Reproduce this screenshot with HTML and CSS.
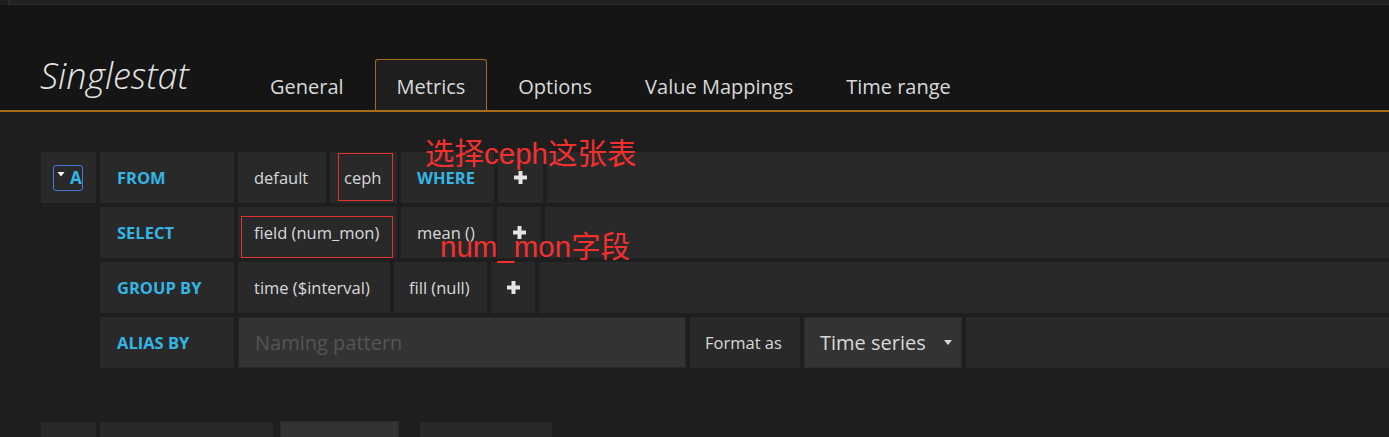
FILE: index.html
```html
<!DOCTYPE html>
<html lang="zh">
<head>
<meta charset="utf-8">
<title>Singlestat - Metrics</title>
<link rel="stylesheet" href="styles.css">
</head>
<body>
<div class="topbar"></div>
<header class="header">
  <h1 class="title">Singlestat</h1>
  <nav class="tabs">
    <a class="tab">General</a>
    <a class="tab active">Metrics</a>
    <a class="tab">Options</a>
    <a class="tab">Value Mappings</a>
    <a class="tab">Time range</a>
  </nav>
</header>
<main class="editor">
  <div class="query">
    <div class="row">
      <div class="cell toggle">
        <span class="toggle-box">
          <svg class="tri" width="7" height="5" viewBox="0 0 7 5"><path d="M0 0H7L3.5 4.5Z" fill="#ffffff"/></svg>
          <span class="ref">A</span>
        </span>
      </div>
      <div class="cell label">FROM</div>
      <div class="cell w-default">default</div>
      <div class="cell w-ceph">ceph<span class="mark mark-ceph"></span></div>
      <div class="cell kw w-where">WHERE</div>
      <div class="cell plus w-plus1"><svg width="13" height="13" viewBox="0 0 13 13"><path d="M4.5 0H8.5V4.5H13V8.5H8.5V13H4.5V8.5H0V4.5H4.5Z" fill="#e4e4e4"/></svg></div>
      <div class="cell filler"></div>
    </div>
    <div class="row sub">
      <div class="cell label">SELECT</div>
      <div class="cell w-field">field (num_mon)<span class="mark mark-field"></span></div>
      <div class="cell w-mean">mean ()</div>
      <div class="cell plus w-plus"><svg width="13" height="13" viewBox="0 0 13 13"><path d="M4.5 0H8.5V4.5H13V8.5H8.5V13H4.5V8.5H0V4.5H4.5Z" fill="#e4e4e4"/></svg></div>
      <div class="cell filler"></div>
    </div>
    <div class="row sub">
      <div class="cell label">GROUP BY</div>
      <div class="cell w-time">time ($interval)</div>
      <div class="cell w-fill">fill (null)</div>
      <div class="cell plus w-plus"><svg width="13" height="13" viewBox="0 0 13 13"><path d="M4.5 0H8.5V4.5H13V8.5H8.5V13H4.5V8.5H0V4.5H4.5Z" fill="#e4e4e4"/></svg></div>
      <div class="cell filler"></div>
    </div>
    <div class="row sub">
      <div class="cell label">ALIAS BY</div>
      <input class="cell input" type="text" placeholder="Naming pattern">
      <div class="cell w-format">Format as</div>
      <div class="cell select">
        <span>Time series</span>
        <svg width="8" height="5" viewBox="0 0 8 5"><path d="M0 0H8L4 5Z" fill="#d8d9da"/></svg>
      </div>
      <div class="cell filler"></div>
    </div>
  </div>
  <div class="row next">
    <div class="cell b1"></div>
    <div class="cell b2"></div>
    <div class="cell b3"></div>
    <div class="cell b4"></div>
  </div>
  <div class="note note-ceph">选择ceph这张表</div>
  <div class="note note-field">num_mon字段</div>
</main>
</body>
</html>
```

FILE: styles.css
```css
* {
  box-sizing: border-box;
  margin: 0;
  padding: 0;
}

body {
  width: 1389px;
  height: 437px;
  overflow: hidden;
  background: #1f1e1f;
  font-family: "Open Sans", "Liberation Sans", sans-serif;
  color: #d8d9da;
}

.topbar {
  height: 5px;
  margin-left: 8px;
  background: #222223;
  border-left: 1px solid #2e2e2e;
  border-bottom: 1px solid #2e2e2e;
}

.header {
  height: 107px;
  background: #151515;
  border-bottom: 2px solid #a56e17;
  display: flex;
  align-items: flex-end;
  padding-left: 40px;
}

.title {
  width: 208px;
  font-size: 36px;
  font-style: italic;
  font-weight: 300;
  line-height: 42px;
  margin-bottom: 13px;
  color: #e4e4e4;
}

.tabs {
  display: flex;
  gap: 9px;
}

.tab {
  height: 51px;
  padding: 3px 21px 0;
  display: flex;
  align-items: center;
  font-size: 20px;
  color: #d8d9da;
  border: 1px solid transparent;
  border-bottom: none;
  border-radius: 3px 3px 0 0;
}

.tab.active {
  background: #1f1e1f;
  border-color: #a36e1c;
}

.editor {
  position: relative;
  padding: 40px 0 0 41px;
}

.query {
  display: flex;
  flex-direction: column;
  gap: 4px;
}

.row {
  display: flex;
  height: 51px;
}

.row.sub {
  margin-left: 59px;
}

.cell {
  position: relative;
  flex: none;
  height: 51px;
  margin-right: 4px;
  padding: 0 16px 1px;
  background: #292929;
  display: flex;
  align-items: center;
  font-size: 16.5px;
  color: #d8d9da;
  white-space: nowrap;
}

.cell.filler {
  flex: 1;
  margin-right: 0;
}

.toggle {
  width: 55px;
  padding: 0;
  justify-content: center;
}

.toggle-box {
  width: 30px;
  height: 26px;
  margin-left: -1px;
  border: 1px solid #4479dc;
  border-radius: 3px;
  display: flex;
  align-items: center;
  padding-left: 3px;
  gap: 5px;
}

.tri {
  width: 8px;
  margin-bottom: 6px;
}

.ref {
  font-size: 17px;
  font-weight: 700;
  color: #33b5e5;
  line-height: 1;
}

.label {
  width: 134px;
  padding-left: 17px;
  font-weight: 700;
  color: #33b5e5;
}

.kw {
  font-weight: 700;
  color: #33b5e5;
}

.plus {
  padding: 0;
  justify-content: center;
}

.w-default { width: 88px; }
.w-ceph { width: 67px; padding-left: 14px; }
.w-where { width: 93px; }
.w-plus1 { width: 45px; }
.w-plus { width: 44px; }
.w-field { width: 159px; }
.w-mean { width: 92px; }
.w-time { width: 152px; }
.w-fill { width: 93px; padding-left: 15px; }
.w-format { width: 110px; padding-left: 15px; }

.mark {
  position: absolute;
  border: 1px solid #e8312f;
}

.mark-ceph {
  left: 8px;
  top: 1px;
  width: 55px;
  height: 48px;
}

.mark-field {
  left: 3px;
  top: 9px;
  width: 152px;
  height: 42px;
}

.input {
  width: 448px;
  background: #333333;
  border: 1px solid #272727;
  font-family: "Open Sans", "Liberation Sans", sans-serif;
  font-size: 20px;
  color: #d8d9da;
  outline: none;
}

.input::placeholder {
  color: #555555;
}

.select {
  width: 158px;
  background: #333333;
  border: 1px solid #2b2b2b;
  font-size: 20px;
  padding: 0 9px 0 15px;
  justify-content: space-between;
}

.row.next {
  margin-top: 54px;
}

.b1 { width: 55px; }
.b2 { width: 173px; margin-right: 7px; }
.b3 {
  width: 119px;
  margin-right: 21px;
  margin-top: -1px;
  background: #333333;
  border: 1px solid #2b2b2b;
}
.b4 { width: 132px; }

.note {
  position: absolute;
  font-family: "Liberation Sans", "Noto Sans CJK SC", sans-serif;
  font-size: 29.5px;
  line-height: 29px;
  color: #f4302f;
  white-space: nowrap;
}

.note-ceph {
  left: 425px;
  top: 27px;
}

.note-field {
  left: 440px;
  top: 120px;
}
```
